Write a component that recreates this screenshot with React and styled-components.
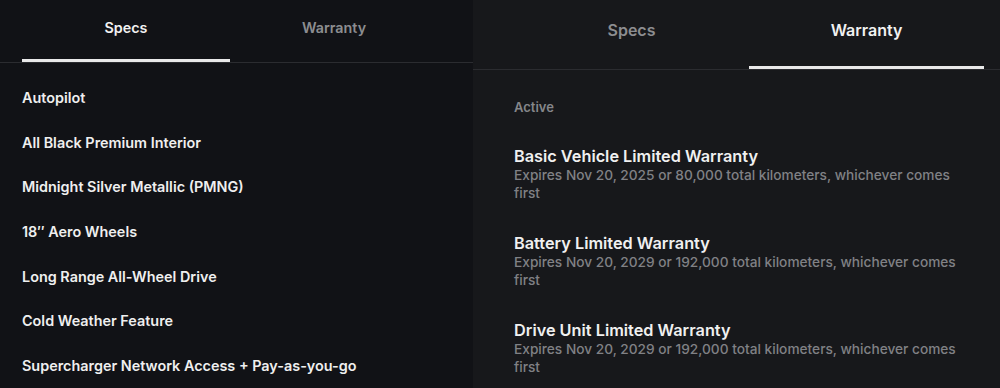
import React from 'react';
import styled, { createGlobalStyle } from 'styled-components';

const GlobalStyle = createGlobalStyle`
  html, body {
    margin: 0;
    padding: 0;
    background: #111216;
  }
  body {
    font-family: Inter, "Noto Sans", "Liberation Sans", sans-serif;
    -webkit-font-smoothing: antialiased;
  }
`;

const Page = styled.div`
  display: flex;
  width: 1000px;
  height: 388px;
  overflow: hidden;
`;

const Panel = styled.section`
  display: flex;
  flex-direction: column;
  width: ${(p) => p.$width};
  background: ${(p) => p.$bg};
  overflow: hidden;
`;

const TabBar = styled.div`
  display: flex;
  height: ${(p) => p.$height}px;
  padding: ${(p) => p.$pad};
  border-bottom: 1px solid #2b2c30;
  flex-shrink: 0;
`;

const Tab = styled.div`
  flex: 1;
  display: flex;
  justify-content: center;
  align-items: flex-start;
  padding-top: ${(p) => p.$top}px;
  font-size: ${(p) => p.$size}px;
  line-height: 20px;
  font-weight: 600;
  color: ${(p) => (p.$active ? '#f1f1f1' : '#8c8d90')};
  border-bottom: 3px solid ${(p) => (p.$active ? '#e9e9e9' : 'transparent')};
`;

const SpecList = styled.ul`
  list-style: none;
  margin: 0;
  padding: 12px 0 0 22px;
`;

const SpecItem = styled.li`
  height: 44.7px;
  display: flex;
  align-items: center;
  font-size: 14.4px;
  font-weight: 600;
  color: #efefef;
`;

const WarrantyBody = styled.div`
  display: flex;
  flex-direction: column;
  padding: 29px 16px 0 41px;
`;

const SectionLabel = styled.div`
  font-size: 13px;
  line-height: 16px;
  font-weight: 600;
  color: #85868a;
  margin-bottom: 31px;
`;

const Coverage = styled.div`
  display: flex;
  flex-direction: column;
  margin-bottom: 31px;
`;

const CoverageTitle = styled.div`
  font-size: 16.3px;
  line-height: 20px;
  font-weight: 600;
  color: #f0f0f0;
`;

const CoverageNote = styled.div`
  max-width: 452px;
  font-size: 13.7px;
  line-height: 18px;
  font-weight: 500;
  color: #808185;
`;

const specs = [
  'Autopilot',
  'All Black Premium Interior',
  'Midnight Silver Metallic (PMNG)',
  '18\u2032\u2032 Aero Wheels',
  'Long Range All-Wheel Drive',
  'Cold Weather Feature',
  'Supercharger Network Access + Pay-as-you-go',
];

const warranties = [
  {
    title: 'Basic Vehicle Limited Warranty',
    note: 'Expires Nov 20, 2025 or 80,000 total kilometers, whichever comes first',
  },
  {
    title: 'Battery Limited Warranty',
    note: 'Expires Nov 20, 2029 or 192,000 total kilometers, whichever comes first',
  },
  {
    title: 'Drive Unit Limited Warranty',
    note: 'Expires Nov 20, 2029 or 192,000 total kilometers, whichever comes first',
  },
];

export default function App() {
  return (
    <>
      <GlobalStyle />
      <Page>
        <Panel $width="473px" $bg="#111216">
          <TabBar $height={62} $pad="0 35px 0 22px">
            <Tab $active $top={18} $size={14.3}>Specs</Tab>
            <Tab $top={18} $size={14.3}>Warranty</Tab>
          </TabBar>
          <SpecList>
            {specs.map((s) => (
              <SpecItem key={s}>{s}</SpecItem>
            ))}
          </SpecList>
        </Panel>
        <Panel $width="527px" $bg="#17181b">
          <TabBar $height={69} $pad="0 16px 0 41px">
            <Tab $top={20} $size={16}>Specs</Tab>
            <Tab $active $top={20} $size={16}>Warranty</Tab>
          </TabBar>
          <WarrantyBody>
            <SectionLabel>Active</SectionLabel>
            {warranties.map((w) => (
              <Coverage key={w.title}>
                <CoverageTitle>{w.title}</CoverageTitle>
                <CoverageNote>{w.note}</CoverageNote>
              </Coverage>
            ))}
          </WarrantyBody>
        </Panel>
      </Page>
    </>
  );
}
